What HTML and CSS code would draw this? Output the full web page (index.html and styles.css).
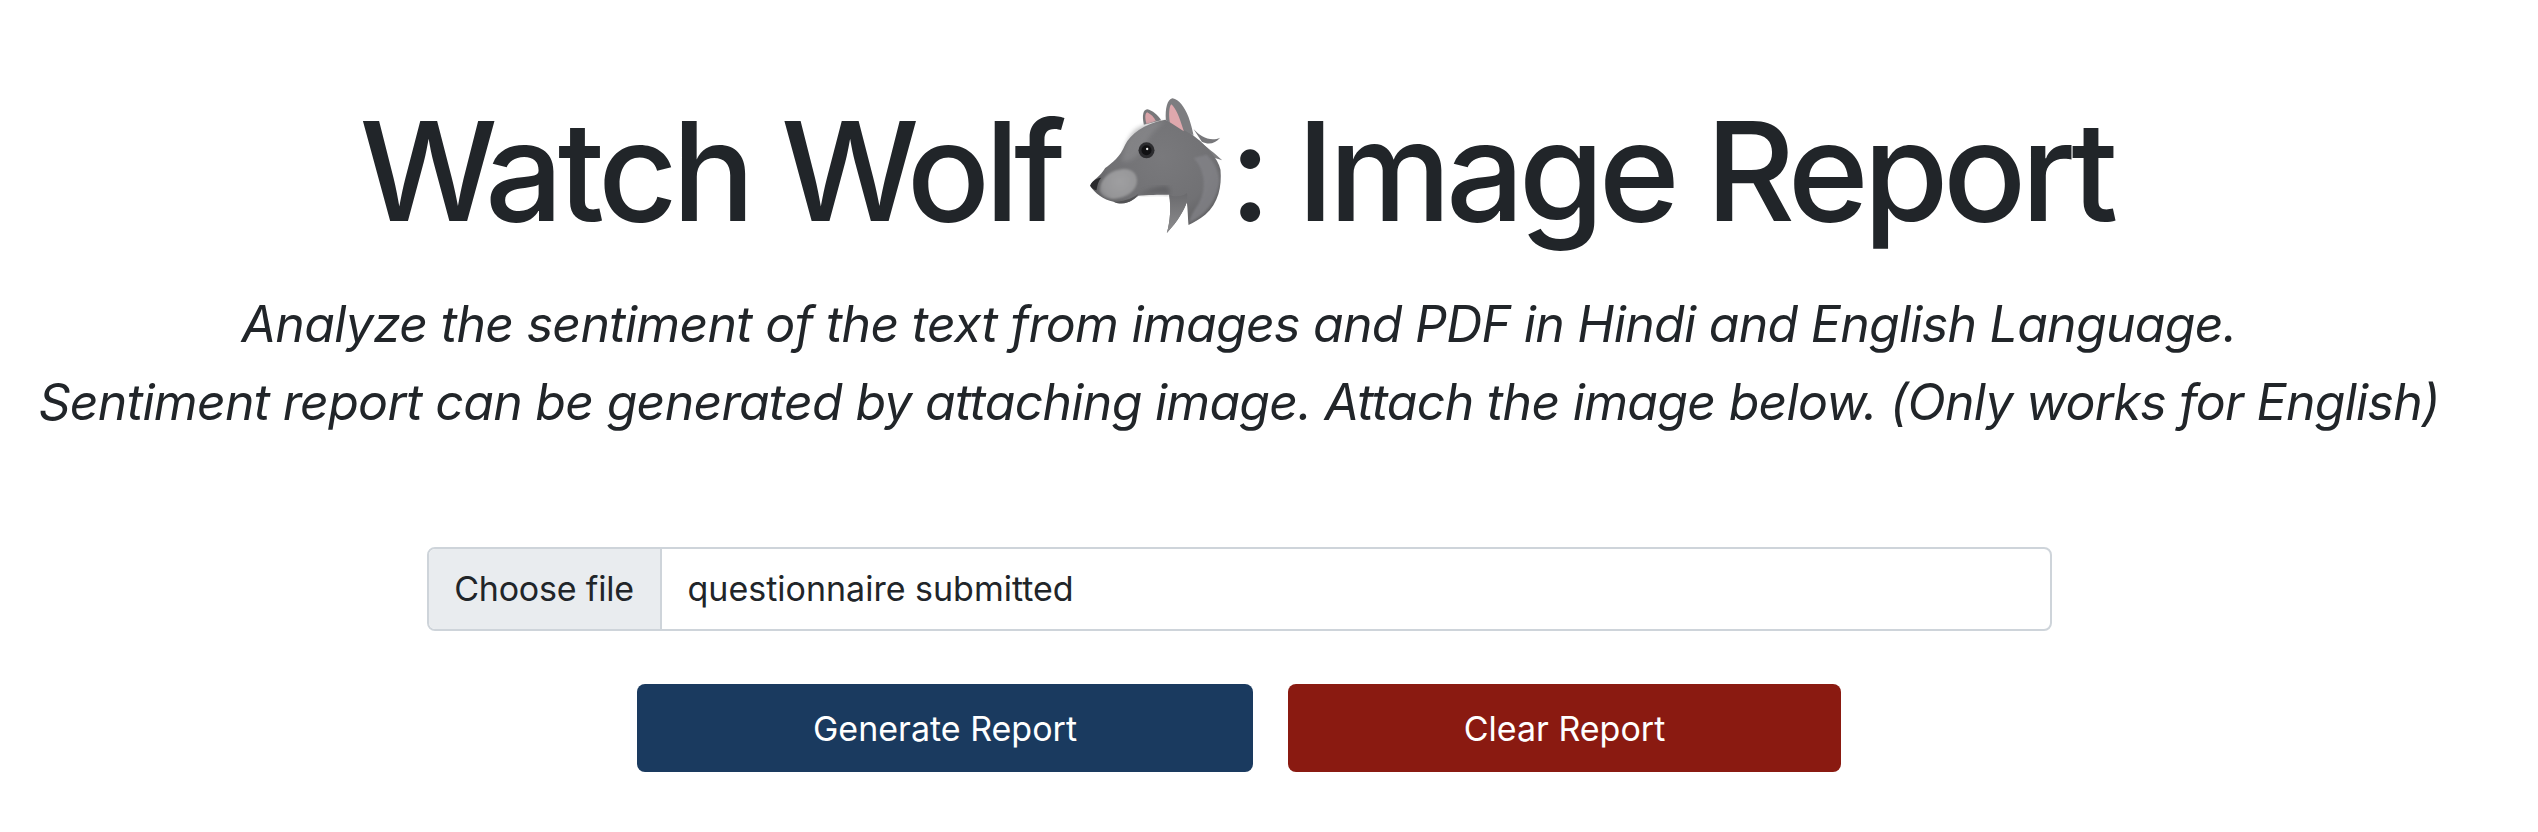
FILE: index.html
```html
<!DOCTYPE html>
<html lang="en">
<head>
    <meta charset="UTF-8">
    <title>Watch Wolf: Image Report</title>
    <link rel="stylesheet" href="styles.css">
</head>

<body>
    <main>
        <h1>Watch Wolf <svg class="wolf" viewBox="95 55 395 405" xmlns="http://www.w3.org/2000/svg" aria-hidden="true">
            <defs>
                <radialGradient id="headFill" gradientUnits="userSpaceOnUse" cx="310" cy="230" r="260">
                    <stop offset="0" stop-color="#79797c"/>
                    <stop offset="0.6" stop-color="#717174"/>
                    <stop offset="1" stop-color="#58585a"/>
                </radialGradient>
                <linearGradient id="hairFill" x1="0" y1="0" x2="0" y2="1">
                    <stop offset="0" stop-color="#6a6a6d"/>
                    <stop offset="1" stop-color="#8d8d8f"/>
                </linearGradient>
                <radialGradient id="muzzleFill" gradientUnits="userSpaceOnUse" cx="185" cy="305" r="70">
                    <stop offset="0" stop-color="#9f9fa1"/>
                    <stop offset="0.75" stop-color="#959597"/>
                    <stop offset="1" stop-color="#848487"/>
                </radialGradient>
                <filter id="soft"><feGaussianBlur stdDeviation="7"/></filter>
                <filter id="softer"><feGaussianBlur stdDeviation="3"/></filter>
            </defs>
            <path d="M256 135C250 108 254 90 266 89C282 92 298 106 308 122Z" fill="#77777a"/>
            <path d="M264 133C258 114 260 100 266 98C278 104 286 112 292 124Z" fill="#d9a3a8"/>
            <path d="M405 148C425 170 455 188 485 174C470 192 450 196 430 186Z" fill="#77777a"/>
            <path d="M420 180C445 205 470 220 491 242C465 234 440 226 415 215Z" fill="#7d7d80"/>
            <path d="M95 318C102 300 125 292 140 265C160 250 185 232 200 195C215 165 255 132 320 120C350 130 385 150 410 172C445 200 478 235 486 270C490 320 480 370 440 405C425 418 405 428 390 436C388 415 388 390 385 368C375 395 358 425 325 460C335 425 338 385 332 345C300 345 265 345 240 348C215 370 190 378 165 366C135 360 108 340 95 318Z" fill="url(#headFill)"/>
            <path d="M405 235C440 270 445 330 420 372C405 395 395 410 392 430C420 415 470 385 482 310C484 280 470 250 445 225Z" fill="#85858a" opacity="0.7" filter="url(#softer)"/>
            <path d="M332 345C345 352 372 352 385 340C388 350 386 360 385 368C375 395 358 425 325 460C335 425 338 385 332 345Z" fill="url(#hairFill)"/>
            <path d="M240 348C270 340 305 340 332 345C338 330 330 315 310 320C285 325 262 332 240 348Z" fill="#555558" opacity="0.6" filter="url(#soft)"/>
            <path d="M230 150C205 175 195 210 190 245C225 250 240 225 262 190C280 160 300 140 320 125C285 125 255 135 230 150Z" fill="#8f8f92" opacity="0.55" filter="url(#soft)"/>
            <path d="M124 335C122 295 160 268 200 268C230 269 242 296 232 320C222 344 190 358 160 358C142 356 130 348 124 335Z" fill="url(#muzzleFill)" filter="url(#softer)"/>
            <path d="M165 366C190 366 220 358 240 342C228 362 198 380 165 366Z" fill="#525254"/>
            <path d="M95 318C100 305 112 296 128 294C118 306 116 320 114 332C106 330 100 326 95 318Z" fill="#2a2a2d"/>
            <path d="M322 122C320 85 326 60 342 56C362 60 378 82 390 112C396 130 402 150 405 167C380 155 350 135 322 122Z" fill="#7d7d80"/>
            <path d="M334 128C330 105 332 82 338 74C352 85 362 110 376 155C362 146 348 136 334 128Z" fill="#dfa8ad"/>
            <circle cx="264" cy="212" r="24" fill="#2c2c2f"/>
            <circle cx="264" cy="212" r="15" fill="#111113"/>
            <circle cx="266" cy="208" r="3.5" fill="#f2f2f2"/>
        </svg>: Image Report</h1>
        <p class="lead">Analyze the sentiment of the text from images and PDF in Hindi and English Language.</p>
        <p class="lead">Sentiment report can be generated by attaching image. Attach the image below. (Only works for English)</p>

        <form class="report-form">
            <div class="file-input">
                <span class="file-button">Choose file</span>
                <span class="file-name">questionnaire submitted</span>
            </div>
            <div class="actions">
                <button type="button" class="btn btn-generate">Generate Report</button>
                <button type="button" class="btn btn-clear">Clear Report</button>
            </div>
        </form>
    </main>
</body>
</html>
```

FILE: styles.css
```css
html, body {
    height: 100%;
    overflow: hidden;
}

body {
    margin: 0;
    padding-right: 60px;
    font-family: Inter, "Liberation Sans", sans-serif;
    background-color: #ffffff;
    color: #212529;
}

main {
    display: flex;
    flex-direction: column;
    align-items: center;
    padding-top: 86px;
}

h1 {
    margin: 0 0 29px;
    padding-right: 6px;
    font-size: 138px;
    font-weight: 500;
    line-height: 170px;
    letter-spacing: -5.5px;
    white-space: nowrap;
}

.wolf {
    width: 136px;
    height: 135px;
    margin-left: -4px;
    margin-right: 5px;
    vertical-align: -12px;
}

.lead {
    margin: 0;
    font-size: 50px;
    font-style: italic;
    letter-spacing: -0.72px;
    line-height: 78px;
    white-space: nowrap;
}

.report-form {
    display: flex;
    flex-direction: column;
    align-items: center;
    margin-top: 106px;
}

.file-input {
    display: flex;
    width: 1625px;
    height: 84px;
    box-sizing: border-box;
    border: 2px solid #ced4da;
    border-radius: 8px;
    font-size: 34px;
    line-height: 80px;
    overflow: hidden;
}

.file-button {
    width: 231px;
    text-align: center;
    letter-spacing: -0.2px;
    background-color: #e9ecef;
    border-right: 2px solid #ced4da;
}

.file-name {
    padding-left: 26px;
}

.actions {
    display: flex;
    gap: 35px;
    margin-top: 53px;
}

.btn {
    height: 88px;
    border: none;
    border-radius: 8px;
    color: #ffffff;
    font-family: inherit;
    font-size: 34px;
    cursor: pointer;
}

.btn-generate {
    width: 616px;
    background-color: #1a3a5f;
}

.btn-clear {
    width: 553px;
    background-color: #8a1a11;
}
```
